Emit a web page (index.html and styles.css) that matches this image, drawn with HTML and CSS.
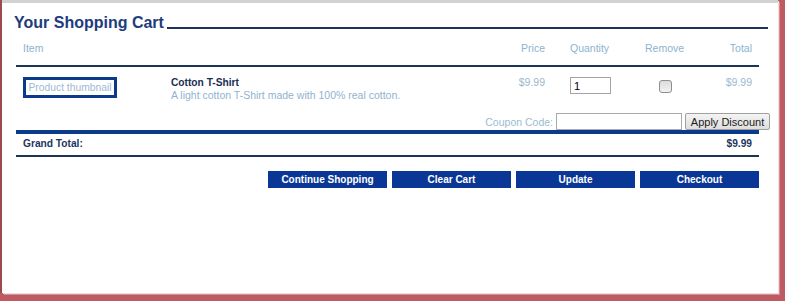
FILE: index.html
```html
<!DOCTYPE html>
<html>
<head>
<meta charset="utf-8">
<title>Your Shopping Cart</title>
<link rel="stylesheet" href="styles.css">
</head>
<body>
<div class="window">
  <div class="title-row">
    <h1 class="title">Your Shopping Cart</h1>
    <span class="rule"></span>
  </div>
  <div class="cart">
    <div class="grid head">
      <div class="c-item">Item</div>
      <div class="c-price">Price</div>
      <div class="c-qty">Quantity</div>
      <div class="c-remove">Remove</div>
      <div class="c-total">Total</div>
    </div>
    <div class="grid item">
      <div class="c-thumb"><span class="thumb">Product thumbnail</span></div>
      <div class="c-desc">
        <div class="name">Cotton T-Shirt</div>
        <div class="desc">A light cotton T-Shirt made with 100% real cotton.</div>
      </div>
      <div class="c-price light">$9.99</div>
      <div class="c-qty"><input class="qty" type="text" value="1"></div>
      <div class="c-remove"><input class="check" type="checkbox"></div>
      <div class="c-total light">$9.99</div>
    </div>
    <div class="coupon">
      <label class="coupon-label">Coupon Code:</label>
      <input class="coupon-input" type="text">
      <button class="apply">Apply Discount</button>
    </div>
    <div class="grand">
      <span>Grand Total:</span>
      <span>$9.99</span>
    </div>
  </div>
  <div class="actions">
    <button class="btn">Continue Shopping</button>
    <button class="btn">Clear Cart</button>
    <button class="btn">Update</button>
    <button class="btn">Checkout</button>
  </div>
</div>
</body>
</html>
```
FILE: styles.css
```css
html, body {
  margin: 0;
  padding: 0;
}
body {
  background: #bd5a62;
  font-family: "Liberation Sans", Arial, sans-serif;
  width: 785px;
  height: 301px;
  overflow: hidden;
}
.window {
  margin-left: 2px;
  width: 776px;
  height: 293px;
  box-sizing: border-box;
  background: #ffffff;
  border-top: 3px solid #d2d2d2;
  box-shadow: -2px 0 0 #9c4a50, 1px 1px 0 #f3dcdc, 2px 2px 0 #d49096;
}
.title-row {
  display: flex;
  align-items: flex-end;
  padding: 11px 10px 0 12px;
}
.title {
  margin: 0 3px 0 0;
  font-size: 16px;
  line-height: 18px;
  font-weight: 700;
  color: #1d3b7d;
  white-space: nowrap;
}
.rule {
  flex: 1;
  height: 2px;
  margin-bottom: 3px;
  background: #1c3557;
}
.cart {
  margin-left: 14px;
  width: 743px;
}
.grid {
  display: grid;
  grid-template-columns: 148px 312px 62px 100px 40px 67px;
  padding: 0 7px;
}
.head {
  padding-top: 10px;
  padding-bottom: 10px;
  border-bottom: 2px solid #1c3557;
  font-size: 10.5px;
  line-height: 13px;
  color: #8db3cf;
}
.head .c-item {
  grid-column: 1 / 3;
}
.c-price {
  text-align: right;
}
.c-qty {
  padding-left: 25px;
}
.c-total {
  text-align: right;
}
.item {
  height: 46px;
  box-sizing: border-box;
  padding-top: 9px;
  align-items: start;
  font-size: 10.5px;
  line-height: 13px;
}
.light {
  color: #9bb8cd;
}
.thumb {
  display: inline-block;
  margin-top: 1px;
  width: 94px;
  height: 21px;
  box-sizing: border-box;
  border: 3px solid #0c3a8a;
  font-size: 10.3px;
  line-height: 15px;
  color: #9dbad2;
  text-align: center;
  white-space: nowrap;
  overflow: hidden;
}
.name {
  font-size: 10.2px;
  font-weight: 700;
  color: #1a2d55;
}
.desc {
  color: #8fb4cf;
}
.qty {
  display: block;
  margin: 1px 0 0 0;
  width: 41px;
  height: 17px;
  box-sizing: border-box;
  border: 1px solid #a3a3a3;
  padding: 0 3px;
  font-family: "Liberation Sans", Arial, sans-serif;
  font-size: 11px;
  color: #000;
}
.check {
  appearance: none;
  -webkit-appearance: none;
  display: block;
  margin: 4px 0 0 14px;
  width: 13px;
  height: 13px;
  box-sizing: border-box;
  border: 1px solid #8e8e8e;
  border-radius: 3px;
  background: linear-gradient(#dcdcdc, #f2f2f2);
}
.coupon {
  display: flex;
  justify-content: flex-end;
  align-items: center;
  height: 17px;
  margin-right: -11px;
}
.coupon-label {
  margin-right: 3px;
  font-size: 10.5px;
  color: #9bbbd0;
}
.coupon-input {
  width: 126px;
  height: 17px;
  box-sizing: border-box;
  border: 1px solid #a9a9a9;
  margin: 0;
}
.apply {
  margin-left: 3px;
  width: 85px;
  height: 17px;
  box-sizing: border-box;
  padding: 0;
  border: 1px solid #a0a0a0;
  border-radius: 2px;
  background: linear-gradient(#f4f4f4, #dedede);
  font-family: "Liberation Sans", Arial, sans-serif;
  font-size: 11px;
  color: #1a1a1a;
}
.grand {
  display: flex;
  justify-content: space-between;
  padding: 4px 7px 5px;
  border-top: 4px solid #0b3a8c;
  border-bottom: 2px solid #1c3557;
  font-size: 10.2px;
  line-height: 12px;
  font-weight: 700;
  color: #1c3560;
}
.actions {
  display: flex;
  justify-content: flex-end;
  gap: 5px;
  margin: 14px 0 0 14px;
  width: 743px;
}
.btn {
  width: 119px;
  height: 17px;
  padding: 0;
  border: 0;
  background: #0a3796;
  color: #ffffff;
  font-family: "Liberation Sans", Arial, sans-serif;
  font-size: 10px;
  font-weight: 700;
}
```
